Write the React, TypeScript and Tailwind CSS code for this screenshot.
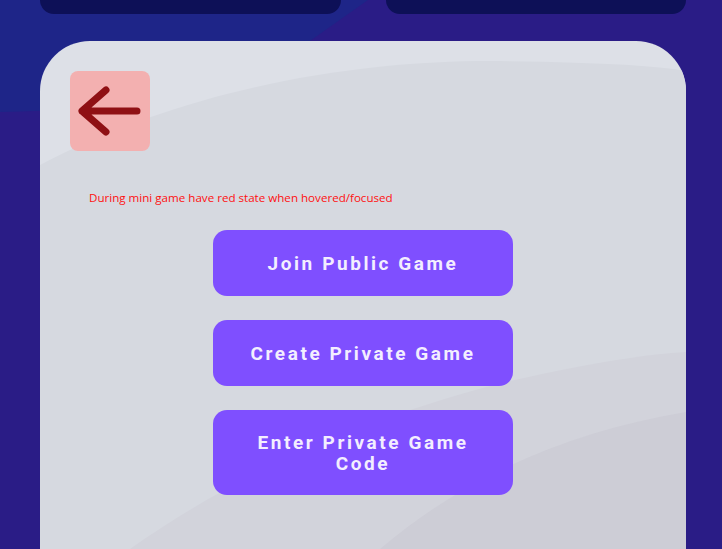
const buttons = ['Join Public Game', 'Create Private Game', 'Enter Private Game Code']

function BackArrow() {
  return (
    <svg width="80" height="80" viewBox="0 0 80 80" fill="none">
      <path
        d="M67 40H12M36 19L12 40L36 61"
        stroke="#8f1014"
        strokeWidth="7"
        strokeLinecap="round"
        strokeLinejoin="round"
      />
    </svg>
  )
}

export default function App() {
  return (
    <div className="relative h-[549px] w-full overflow-hidden bg-[#2a1c86]">
      {/* blue glow behind the top-left */}
      <svg className="absolute inset-0 h-full w-full" viewBox="0 0 722 549" preserveAspectRatio="none">
        <path d="M0 0H368L300 48Q220 108 0 112Z" fill="#1e2588" />
      </svg>

      <div className="relative pl-10 pr-9">
        <div className="flex gap-[45px]">
          <div className="h-[14px] flex-1 rounded-b-[14px] bg-[#0d1057]" />
          <div className="h-[14px] flex-1 rounded-b-[14px] bg-[#0d1057]" />
        </div>

        <div className="relative mt-[27px] h-[560px] overflow-hidden rounded-t-[50px] bg-[#dde0e7]">
          <svg className="absolute inset-0 h-full w-full" viewBox="0 0 646 560" preserveAspectRatio="none">
            <path d="M0 124C150 45 320 20 450 20C560 21 620 25 646 30V560H0Z" fill="#d6d9e0" />
            <path d="M90 508C200 430 330 375 470 340C560 320 610 313 646 311V560H90Z" fill="#d2d3db" />
            <path d="M340 508C420 440 520 392 646 371V560H340Z" fill="#cdcdd6" />
          </svg>

          <div className="relative flex flex-col p-[30px]">
            <button className="flex h-20 w-20 items-center justify-center rounded-[8px] bg-[#f3b0b0]">
              <BackArrow />
            </button>

            <p className="mt-[40px] ml-[19px] font-['Open_Sans',sans-serif] text-[11.6px] leading-[14px] text-[#ff1010]">
              During mini game have red state when hovered/focused
            </p>

            <div className="mt-[25px] flex flex-col items-center gap-6">
              {buttons.map((b) => (
                <button
                  key={b}
                  className={`w-[300px] rounded-[14px] bg-[#7f4fff] px-6 font-['Roboto',sans-serif] text-[19px] font-bold leading-[21px] tracking-[0.135em] text-[#f3eeff] ${
                    b.length > 20 ? 'h-[85px]' : 'h-[66px]'
                  }`}
                >
                  {b}
                </button>
              ))}
            </div>
          </div>
        </div>
      </div>
    </div>
  )
}
